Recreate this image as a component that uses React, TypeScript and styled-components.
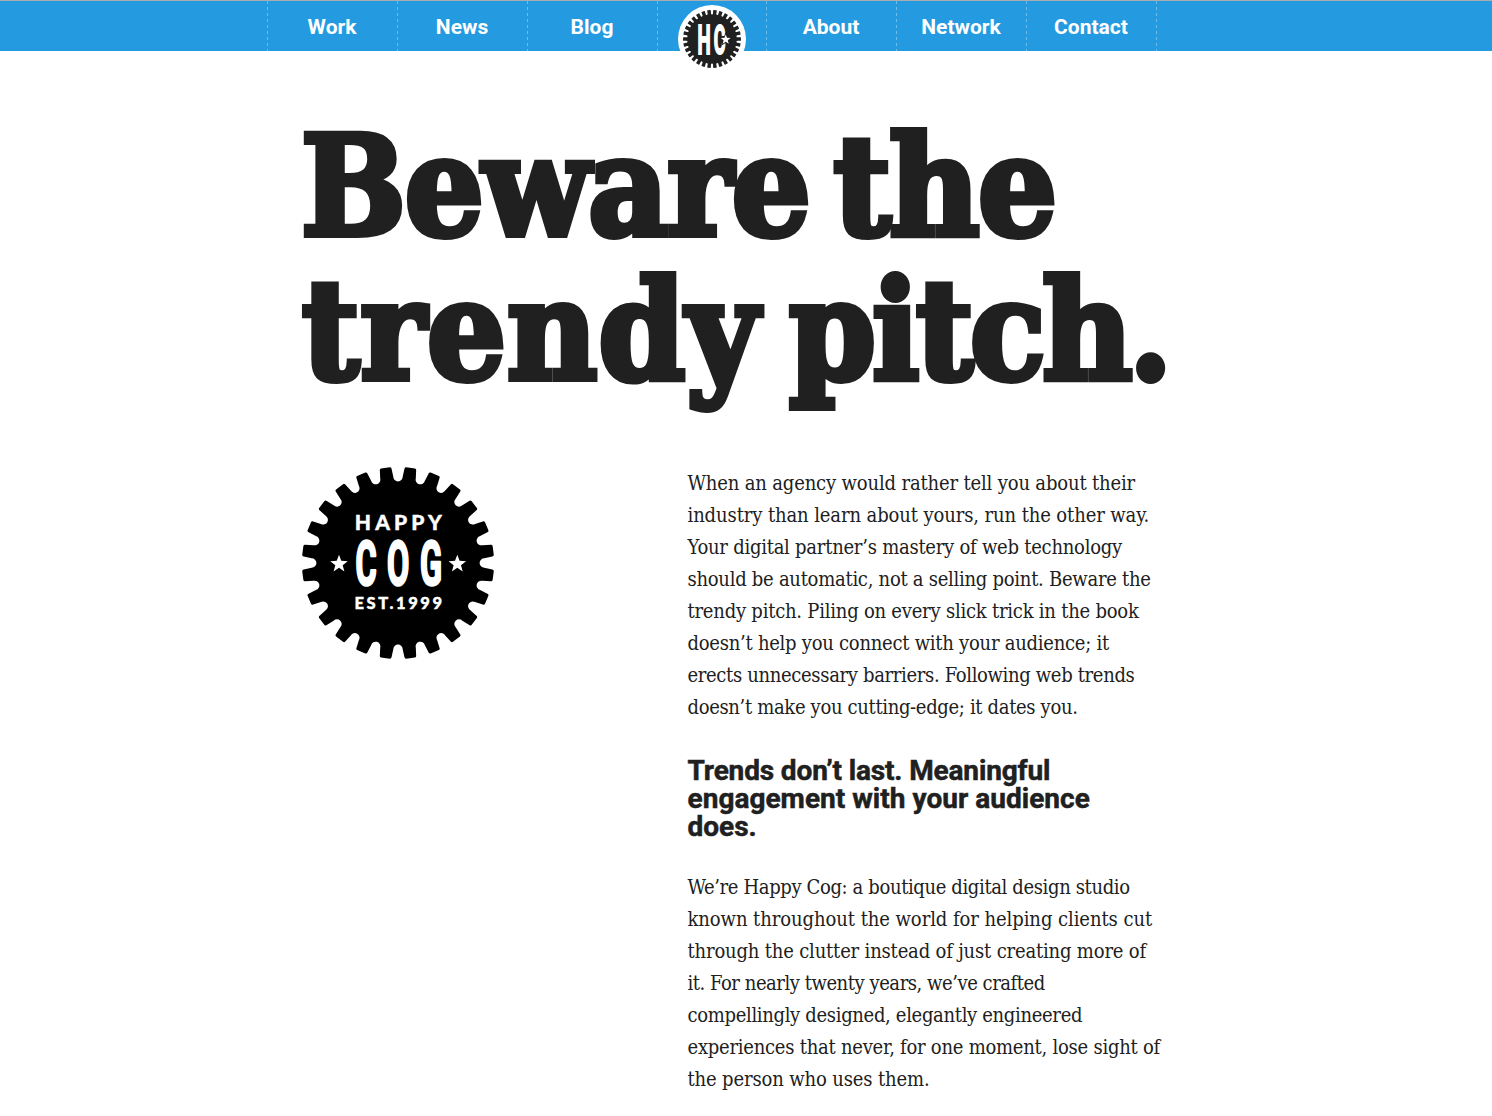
import React from "react";
import styled, { createGlobalStyle } from "styled-components";

const INK = "#202020";
const BLUE = "#249be0";
const SLAB = '"DejaVu Serif Condensed", "DejaVu Serif", serif';
const GROTESQUE = 'Roboto, "Liberation Sans", sans-serif';

const GlobalStyle = createGlobalStyle`
  * { box-sizing: border-box; }
  body { margin: 0; background: #fff; color: ${INK}; }
`;

const Page = styled.div`
  height: 1116px;
  overflow: hidden;
`;

const Header = styled.header`
  height: 51px;
  border-top: 1px solid #aaadb0;
  background: ${BLUE};
`;

const Nav = styled.nav`
  display: flex;
  width: 890px;
  height: 50px;
  margin-left: 267px;
  background: repeating-linear-gradient(#6fbdeb 0 3px, transparent 3px 6px) right 0 top 0 / 1px 100% no-repeat;
`;

const dashedEdge = `
  background: repeating-linear-gradient(#6fbdeb 0 3px, transparent 3px 6px) 0 0 / 1px 100% no-repeat;
`;

const NavLink = styled.a`
  flex: 0 0 130px;
  color: #fff;
  font: bold 21px/53px ${GROTESQUE};
  text-align: center;
  text-decoration: none;
  ${dashedEdge}
`;

const NavLogo = styled.a`
  flex: 0 0 109px;
  display: flex;
  justify-content: center;
  align-items: flex-start;
  padding-top: 4px;
  ${dashedEdge}

  svg { flex: none; }
`;

const Main = styled.main`
  width: 880px;
  margin: 64px 0 0 301px;
`;

const Title = styled.h1`
  margin: 0;
  font: bold 138px/144px ${SLAB};
  white-space: nowrap;
  -webkit-text-stroke: 6px ${INK};
`;

const TitleRow = styled.span<{ $indent: number; $gap: number }>`
  display: block;
  margin-left: ${(p) => p.$indent}px;
  word-spacing: ${(p) => p.$gap}px;
`;

const TitleWord = styled.span<{ $track: number }>`
  letter-spacing: ${(p) => p.$track}px;
`;

const Columns = styled.div`
  display: grid;
  grid-template-columns: 386px 480px;
  margin-top: 64px;
  padding-left: 1px;
`;

const Copy = styled.p`
  margin: 0;
  font: 20px/32px ${SLAB};
`;

const Subhead = styled.h2`
  margin: 34px 0 30px;
  font: bold 28px/28px ${GROTESQUE};
  -webkit-text-stroke: 0.5px ${INK};
`;

const Line = styled.span<{ $track: number }>`
  display: block;
  margin-left: -0.5px;
  letter-spacing: ${(p) => p.$track}px;
  white-space: nowrap;
`;

type Row = [text: string, track: number];

const introRows: Row[] = [
  ["When an agency would rather tell you about their", -0.16],
  ["industry than learn about yours, run the other way.", -0.11],
  ["Your digital partner’s mastery of web technology", -0.25],
  ["should be automatic, not a selling point. Beware the", -0.27],
  ["trendy pitch. Piling on every slick trick in the book", -0.23],
  ["doesn’t help you connect with your audience; it", -0.26],
  ["erects unnecessary barriers. Following web trends", -0.34],
  ["doesn’t make you cutting-edge; it dates you.", -0.34],
];

const subheadRows: Row[] = [
  ["Trends don’t last. Meaningful", -0.14],
  ["engagement with your audience", 0.03],
  ["does.", 0],
];

const studioRows: Row[] = [
  ["We’re Happy Cog: a boutique digital design studio", -0.37],
  ["known throughout the world for helping clients cut", -0.07],
  ["through the clutter instead of just creating more of", -0.18],
  ["it. For nearly twenty years, we’ve crafted", -0.46],
  ["compellingly designed, elegantly engineered", -0.33],
  ["experiences that never, for one moment, lose sight of", -0.25],
  ["the person who uses them.", -0.14],
];

const Lines = ({ rows }: { rows: Row[] }) => (
  <>
    {rows.map(([text, track]) => (
      <Line key={text} $track={track}>
        {text}{" "}
      </Line>
    ))}
  </>
);

/* One tooth per step: a flat outer edge, then a round-bottomed gap. */
function gearPath(teeth: number, outer: number, shoulder: number, tipHalf: number, rootHalf: number, round: number) {
  const step = (2 * Math.PI) / teeth;
  const at = (a: number, x: number, y: number) => {
    const px = x * Math.cos(a) + y * Math.sin(a);
    const py = x * Math.sin(a) - y * Math.cos(a);
    return `${px.toFixed(2)} ${py.toFixed(2)}`;
  };
  let d = "";
  for (let i = 0; i < teeth; i++) {
    const a = (i + 0.5) * step;
    const g = (i + 1) * step;
    const edge = outer * Math.cos(tipHalf / outer);
    d += `${i ? "L" : "M"}${at(a, -tipHalf, edge - round)}`;
    d += `Q${at(a, -tipHalf, edge)} ${at(a, -tipHalf + round, edge + 0.2)}`;
    d += `L${at(a, tipHalf - round, edge + 0.2)}`;
    d += `Q${at(a, tipHalf, edge)} ${at(a, tipHalf, edge - round)}`;
    d += `L${at(g, -rootHalf, shoulder)}`;
    d += `A${rootHalf} ${rootHalf} 0 0 0 ${at(g, rootHalf, shoulder)}`;
  }
  return d + "Z";
}

function starPoints(cx: number, cy: number, r: number) {
  return Array.from({ length: 10 }, (_, i) => {
    const a = (Math.PI / 5) * i - Math.PI / 2;
    const q = i % 2 ? r * 0.42 : r;
    return `${(cx + q * Math.cos(a)).toFixed(2)},${(cy + q * Math.sin(a)).toFixed(2)}`;
  }).join(" ");
}

const HeaderMark = () => (
  <svg width="68" height="68" viewBox="-34 -34 68 68" role="img">
    <circle r="34" fill="#fff" />
    <path d={gearPath(30, 28.8, 25.6, 1.8, 1, 0.3)} fill={INK} />
    <g
      fill="#fff"
      stroke="#fff"
      strokeWidth="2"
      fontFamily="Roboto, sans-serif"
      fontWeight="700"
      fontSize="41.5"
      textAnchor="middle"
    >
      <text transform="translate(-7.8 14.8) scale(0.45 1)">H</text>
      <text transform="translate(7.6 14.8) scale(0.43 1)">C</text>
    </g>
    <polygon points={starPoints(13.7, 0.6, 5.2)} fill="#fff" stroke={INK} strokeWidth="1.6" paintOrder="stroke" />
  </svg>
);

const CogMark = () => (
  <svg width="192" height="192" viewBox="-96 -96 192 192" role="img">
    <path d={gearPath(24, 96, 86.3, 5.9, 4.7, 1.5)} fill="#000" />
    <g fill="#fff" stroke="#fff" strokeWidth="0.4" fontFamily="Lato, sans-serif" fontWeight="900">
      <text x="-43.2" y="-33" fontSize="21" textLength="87">HAPPY</text>
      <text x="-43.5" y="46" fontSize="16.5" textLength="87.5">EST.1999</text>
    </g>
    <g
      fill="#fff"
      stroke="#fff"
      strokeWidth="2.6"
      strokeLinejoin="round"
      fontFamily="Roboto, sans-serif"
      fontWeight="700"
      fontSize="61"
      textAnchor="middle"
    >
      <text transform="translate(-31.8 22.3) scale(0.53 1)">C</text>
      <text transform="translate(0.2 22.3) scale(0.53 1)">O</text>
      <text transform="translate(33 22.3) scale(0.53 1)">G</text>
    </g>
    <polygon points={starPoints(-59, 1, 9.2)} fill="#fff" />
    <polygon points={starPoints(59.3, 1, 9.2)} fill="#fff" />
  </svg>
);

export default function App() {
  return (
    <Page>
      <GlobalStyle />
      <Header>
        <Nav>
          {["Work", "News", "Blog"].map((label) => (
            <NavLink key={label}>{label}</NavLink>
          ))}
          <NavLogo>
            <HeaderMark />
          </NavLogo>
          {["About", "Network", "Contact"].map((label) => (
            <NavLink key={label}>{label}</NavLink>
          ))}
        </Nav>
      </Header>
      <Main>
        <Title>
          <TitleRow $indent={0} $gap={-18}>
            <TitleWord $track={-1.2}>Beware </TitleWord>
            <TitleWord $track={-1.5}>the</TitleWord>
          </TitleRow>
          <TitleRow $indent={1} $gap={-15}>
            <TitleWord $track={1.1}>trendy </TitleWord>
            <TitleWord $track={-3.4}>pitch.</TitleWord>
          </TitleRow>
        </Title>
        <Columns>
          <CogMark />
          <article>
            <Copy>
              <Lines rows={introRows} />
            </Copy>
            <Subhead>
              <Lines rows={subheadRows} />
            </Subhead>
            <Copy>
              <Lines rows={studioRows} />
            </Copy>
          </article>
        </Columns>
      </Main>
    </Page>
  );
}
